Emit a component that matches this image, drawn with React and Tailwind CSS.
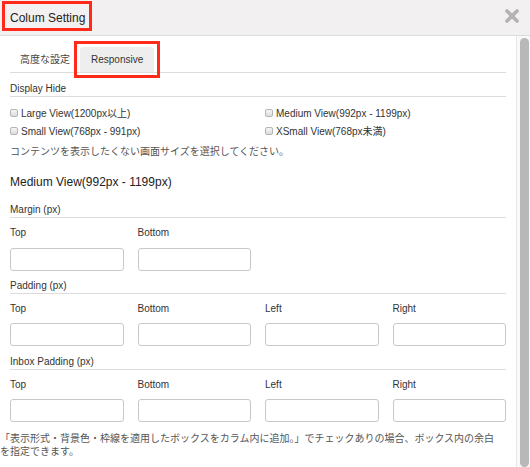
import React from "react";

const Check = ({ label }) => (
  <label className="flex items-center gap-[3px] h-[18px]">
    <span className="w-[8px] h-[8px] rounded-[2px] border border-[#b5b5b5] bg-gradient-to-b from-[#f6f6f6] to-[#dcdcdc]" />
    <span>{label}</span>
  </label>
);

const SectionTitle = ({ children, className = "" }) => (
  <div className={`leading-[14px] border-b border-[#dcdcdc] ${className}`}>{children}</div>
);

const Fields = ({ labels }) => (
  <>
    <div className="grid grid-cols-4 gap-x-[14px] mt-[8px] leading-[14px]">
      {labels.map((l) => (
        <div key={l}>{l}</div>
      ))}
    </div>
    <div className="grid grid-cols-4 gap-x-[14px] mt-[7px]">
      {labels.map((l) => (
        <input
          key={l}
          className="h-[23px] w-full rounded-[3px] border border-[#c8c8c8] bg-white outline-none"
        />
      ))}
    </div>
  </>
);

export default function App() {
  return (
    <div className="relative w-[530px] h-[467px] overflow-hidden bg-white text-[#333] text-[10px] font-['Liberation_Sans','Noto_Sans_CJK_JP',sans-serif]">
      {/* header */}
      <div className="h-[36px] bg-[#f2f0f0] border-b border-[#dcdcdc] flex items-center justify-between pl-[10px] pr-[11px]">
        <span className="text-[12px] text-[#222]">Colum Setting</span>
        <svg width="14" height="14" viewBox="0 0 14 14" className="mt-[-4px]">
          <path d="M2 2 L12 12 M12 2 L2 12" stroke="#b3b3b3" strokeWidth="3.6" strokeLinecap="round" />
        </svg>
      </div>

      <div className="flex h-[431px]">
        <div className="flex-1 pl-[10px] pr-[10px]">
          {/* tabs */}
          <div className="mt-[11px] flex border-b border-[#dcdcdc] h-[26px]">
            <div className="px-[10px] h-[25px] flex items-center text-[#444]">高度な設定</div>
            <div className="px-[11px] h-[25px] flex items-center bg-[#eeeeee] rounded-t-[3px] text-[#333]">Responsive</div>
          </div>

          <SectionTitle className="mt-[9px]">Display Hide</SectionTitle>
          <div className="grid grid-cols-[255px_1fr] mt-[7px]">
            <Check label="Large View(1200px以上)" />
            <Check label="Medium View(992px - 1199px)" />
            <Check label="Small View(768px - 991px)" />
            <Check label="XSmall View(768px未満)" />
          </div>
          <div className="mt-[5px] leading-[14px] text-[#555]">コンテンツを表示したくない画面サイズを選択してください。</div>

          <div className="mt-[15px] text-[12px] leading-[16px] text-[#222]">Medium View(992px - 1199px)</div>

          <SectionTitle className="mt-[13px]">Margin (px)</SectionTitle>
          <div className="grid grid-cols-4 gap-x-[14px] mt-[8px] leading-[14px]">
            <div>Top</div>
            <div>Bottom</div>
          </div>
          <div className="grid grid-cols-4 gap-x-[14px] mt-[8px]">
            <input className="h-[23px] w-full rounded-[3px] border border-[#c8c8c8] bg-white outline-none" />
            <input className="h-[23px] w-full rounded-[3px] border border-[#c8c8c8] bg-white outline-none" />
          </div>

          <SectionTitle className="mt-[8px]">Padding (px)</SectionTitle>
          <Fields labels={["Top", "Bottom", "Left", "Right"]} />

          <SectionTitle className="mt-[9px]">Inbox Padding (px)</SectionTitle>
          <Fields labels={["Top", "Bottom", "Left", "Right"]} />

          <p className="mt-[10px] ml-[-10px] w-[498px] leading-[13px] text-[#555]">
            「表示形式・背景色・枠線を適用したボックスをカラム内に追加。」でチェックありの場合、ボックス内の余白を指定できます。
          </p>
        </div>

        {/* scrollbar */}
        <div className="w-[14px] border-l border-[#e6e6e6] bg-[#f9f9f9] pl-[3px] pt-[2px]">
          <div className="w-[9px] h-full rounded-full bg-[#b8b8b8]" />
        </div>
      </div>

      {/* annotation boxes */}
      <div className="absolute left-[2px] top-[1px] w-[90px] h-[30px] border-[3px] border-[#ff2a1a]" />
      <div className="absolute left-[74px] top-[41px] w-[86px] h-[37px] border-[3px] border-[#ff2a1a]" />
    </div>
  );
}
